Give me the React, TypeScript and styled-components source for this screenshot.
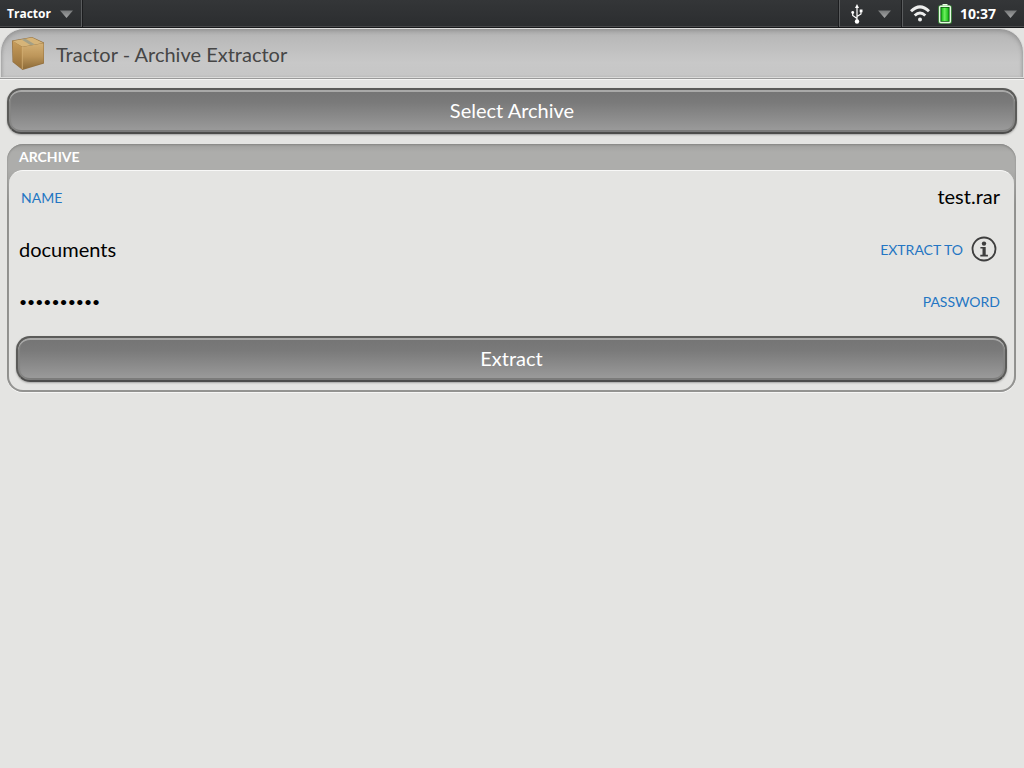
import React from "react";
import styled, { createGlobalStyle } from "styled-components";

const GlobalStyle = createGlobalStyle`
  *, *::before, *::after { box-sizing: border-box; }
  body {
    margin: 0;
    background: #e4e4e2;
    color: #000;
    font-family: Lato, "Open Sans", sans-serif;
  }
`;

const StatusBar = styled.div`
  display: flex;
  justify-content: space-between;
  height: 28px;
  background: linear-gradient(#343638, #2b2d2f);
  border-bottom: 1px solid #17181a;
  box-shadow: inset 0 -1px #48494b;
  color: #fff;
  font-family: "Open Sans", sans-serif;
`;

const StatusGroup = styled.div`
  display: flex;
`;

const StatusButton = styled.button<{ $divider: "left" | "right"; $gap: number; $inset?: number }>`
  display: flex;
  align-items: center;
  gap: ${(p) => p.$gap}px;
  padding: 0 ${(p) => p.$inset ?? 8}px 0 ${(p) => p.$inset ?? 7}px;
  border: 0 solid #5a5c5e;
  border-${(p) => p.$divider}-width: 1px;
  box-shadow: ${(p) => (p.$divider === "left" ? "-1px 0 #1c1d1f" : "1px 0 #1c1d1f")};
  background: none;
  color: inherit;
  font: inherit;
`;

const AppName = styled.span`
  font-size: 12px;
  font-weight: 700;
  line-height: 28px;
`;

const Clock = styled.span`
  font-size: 14px;
  font-weight: 700;
  line-height: 26px;
`;

const Header = styled.header`
  display: flex;
  align-items: center;
  gap: 12px;
  height: 50px;
  padding: 1px 11px 0;
  border: 1px solid #dcdcdb;
  border-radius: 24px 24px 0 0;
  background: linear-gradient(#b4b4b4, #c8c8c8 70%, #c6c6c6);
  box-shadow: inset 0 3px 5px -1px #909090, inset 2px 0 3px -1px #b0b0b0,
    inset -2px 0 3px -1px #b0b0b0;
`;

const HeaderRule = styled.div`
  height: 2px;
  background: #f4f4f3;
  border-top: 1px solid #999;
`;

const Title = styled.h1`
  margin: 0;
  color: #464646;
  font-size: 20px;
  font-weight: 400;
  line-height: 24px;
`;

const Main = styled.main`
  display: flex;
  flex-direction: column;
  gap: 10px;
  padding: 8px 7px;
`;

const ActionButton = styled.button`
  width: 100%;
  height: 46px;
  padding: 0 0 2px;
  border: 2px solid #5b5b59;
  border-bottom-color: #4c4c4b;
  border-radius: 14px;
  background: linear-gradient(#747474, #7a7a7a 30%, #9c9c9c);
  box-shadow: inset 0 2px #a9a9a8, inset 2px 0 1px #858584, inset -2px 0 1px #858584,
    inset 0 -2px #7b7b7a, 0 1px 2px #a5a5a3;
  color: #fff;
  font-family: inherit;
  font-size: 20px;
`;

const Group = styled.section`
  margin-right: 1px;
  padding: 0 2px 2px;
  border-radius: 16px;
  background: linear-gradient(#a0a09e, #adadab 8px, #adadab 26px, #949492 60px);
  box-shadow: inset 0 1px 2px #858583, 0 1px #f6f6f5;
`;

const GroupLabel = styled.h2`
  margin: 0;
  padding: 0 10px 1px;
  color: #fff;
  font-size: 14px;
  font-weight: 700;
  line-height: 25px;
`;

const GroupBody = styled.form`
  padding: 0 7px 8px;
  border-top: 1px solid #f8f8f7;
  border-radius: 14px;
  background: #e4e4e2;
`;

const Row = styled.div`
  display: flex;
  align-items: center;
  justify-content: space-between;
  height: 52px;
  padding: 0 7px 0 3px;
`;

const Caption = styled.label`
  padding-left: 2px;
  color: #2476c3;
  font-size: 14px;
  white-space: nowrap;
`;

const Value = styled.output`
  padding-bottom: 2px;
  font-size: 20px;
`;

const Field = styled.input`
  flex: 1;
  min-width: 0;
  padding: 0;
  border: 0;
  outline: 0;
  background: none;
  color: #000;
  font-family: inherit;
  font-size: ${(p) => (p.type === "password" ? 14 : 20)}px;
`;

const CaptionGroup = styled.div`
  display: flex;
  align-items: center;
  gap: 8px;
  padding-right: 3px;
`;

const InfoButton = styled.button`
  display: flex;
  padding: 0;
  border: 0;
  background: none;
`;

const FormFooter = styled.div`
  padding-top: 9px;
`;

const Arrow = () => (
  <svg width="13" height="8" viewBox="0 0 13 8" aria-hidden="true">
    <defs>
      <linearGradient id="arrow" x2="0" y2="1">
        <stop offset="0" stopColor="#77797a" />
        <stop offset="1" stopColor="#a5a6a7" />
      </linearGradient>
    </defs>
    <path d="M0 .5h13L6.500 8z" fill="url(#arrow)" />
  </svg>
);

const UsbIcon = () => (
  <svg width="12" height="20" viewBox="0 0 12 20" fill="none" stroke="#fff" aria-hidden="true">
    <path d="M6 3v14M6 14.500L1.700 11.500V8.500M6 12.500l4-2.500V7.500" strokeWidth="1.200" />
    <path d="M6 0l2 4H4z" fill="#fff" stroke="none" />
    <circle cx="6" cy="17.500" r="2.200" fill="#fff" stroke="none" />
    <circle cx="1.700" cy="8.500" r="1.400" fill="#fff" stroke="none" />
    <path d="M8.700 5.500h2.800v2.800H8.700z" fill="#fff" stroke="none" />
  </svg>
);

const WifiIcon = () => (
  <svg width="20" height="17" viewBox="0 0 20 17" fill="none" stroke="#eee" aria-hidden="true">
    <path d="M1 6.200Q10-2.400 19 6.200" strokeWidth="2.900" />
    <path d="M4.700 10.500q5.300-5 10.600 0" strokeWidth="2.900" />
    <circle cx="10" cy="14.500" r="2" fill="#eee" stroke="none" />
  </svg>
);

const BatteryIcon = () => (
  <svg width="14" height="20" viewBox="0 0 14 20" aria-hidden="true">
    <defs>
      <linearGradient id="charge">
        <stop offset="0" stopColor="#17b817" />
        <stop offset=".45" stopColor="#6bf05c" />
        <stop offset="1" stopColor="#12b512" />
      </linearGradient>
    </defs>
    <path d="M4.500 0h5v2h-5z" fill="#e8ffe4" />
    <rect x="0" y="1" width="14" height="19" rx="2.500" fill="#3fae3c" opacity=".6" />
    <rect x="1.700" y="2.200" width="10.600" height="16.300" rx="1" fill="#084f0b" stroke="#e4fbe0" strokeWidth="1.500" />
    <path d="M3.300 3.700h7.400v13.300H3.300z" fill="url(#charge)" />
  </svg>
);

const BoxIcon = () => (
  <svg width="32" height="33" viewBox="0 0 32 33" aria-hidden="true">
    <defs>
      <linearGradient id="boxLeft" x2="0" y2="1">
        <stop offset="0" stopColor="#c89d5c" />
        <stop offset="1" stopColor="#96703a" />
      </linearGradient>
      <linearGradient id="boxRight" x2="0" y2="1">
        <stop offset="0" stopColor="#d4b074" />
        <stop offset=".5" stopColor="#bd965a" />
        <stop offset="1" stopColor="#8d6b38" />
      </linearGradient>
    </defs>
    <path d="M0 3.500L20 0l12 5.500v21L10.500 33 .500 25z" fill="#93703f" />
    <path d="M.7 4L10.300 10v22L1 24.600z" fill="url(#boxLeft)" />
    <path d="M10.300 10L31.500 6.200v19.600L10.300 32z" fill="url(#boxRight)" />
    <path d="M.7 3.900L20 .6l11.300 5.400L10.300 9.800z" fill="#d6b478" />
    <path d="M9.500 2.400l4-.7 9.500 5.800-4.200.8z" fill="#a39f85" />
    <path d="M10.300 10v22" stroke="#ddb97c" strokeWidth=".7" />
  </svg>
);

const InfoIcon = () => (
  <svg width="26" height="26" viewBox="0 0 26 26" aria-hidden="true">
    <circle cx="13" cy="13" r="11.500" fill="none" stroke="#3e3e3e" strokeWidth="1.800" />
    <circle cx="13" cy="7.600" r="2.200" fill="#3e3e3e" />
    <path d="M9.400 11h5.300v7.800h2.200v1.600H9.300v-1.600h2.200v-6.200H9.400z" fill="#3e3e3e" />
  </svg>
);

export default function App() {
  return (
    <>
      <GlobalStyle />
      <StatusBar>
        <StatusButton $divider="right" $gap={9}>
          <AppName>Tractor</AppName>
          <Arrow />
        </StatusButton>
        <StatusGroup>
          <StatusButton $divider="left" $gap={15} $inset={11} aria-label="USB connection">
            <UsbIcon />
            <Arrow />
          </StatusButton>
          <StatusButton $divider="left" $gap={8} $inset={7} aria-label="System menu">
            <WifiIcon />
            <BatteryIcon />
            <Clock>10:37</Clock>
            <Arrow />
          </StatusButton>
        </StatusGroup>
      </StatusBar>
      <Header>
        <BoxIcon />
        <Title>Tractor - Archive Extractor</Title>
      </Header>
      <HeaderRule />
      <Main>
        <ActionButton type="button">Select Archive</ActionButton>
        <Group>
          <GroupLabel>ARCHIVE</GroupLabel>
          <GroupBody onSubmit={(e) => e.preventDefault()}>
            <Row>
              <Caption htmlFor="name">NAME</Caption>
              <Value id="name">test.rar</Value>
            </Row>
            <Row>
              <Field id="target" type="text" defaultValue="documents" />
              <CaptionGroup>
                <Caption htmlFor="target">EXTRACT TO</Caption>
                <InfoButton type="button" aria-label="Folder information">
                  <InfoIcon />
                </InfoButton>
              </CaptionGroup>
            </Row>
            <Row>
              <Field id="password" type="password" defaultValue="0123456789" autoComplete="off" />
              <Caption htmlFor="password">PASSWORD</Caption>
            </Row>
            <FormFooter>
              <ActionButton type="submit">Extract</ActionButton>
            </FormFooter>
          </GroupBody>
        </Group>
      </Main>
    </>
  );
}
